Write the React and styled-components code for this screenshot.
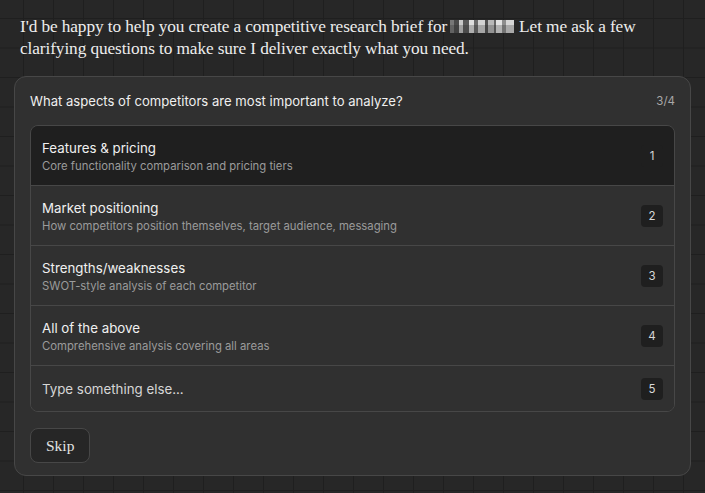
import React from 'react';
import styled, { createGlobalStyle } from 'styled-components';

const GlobalStyle = createGlobalStyle`
  html, body {
    margin: 0;
    padding: 0;
    height: 100%;
  }
  body {
    background-color: #272727;
    background-image:
      linear-gradient(to right, #1f1f1f 1px, transparent 1px),
      linear-gradient(to bottom, #1f1f1f 1px, transparent 1px);
    background-size: 30px 29.5px;
    background-position: 23px 18px;
    font-family: Inter, "Noto Sans", sans-serif;
    color: #ececec;
  }
`;

const Page = styled.div`
  width: 705px;
  height: 493px;
  box-sizing: border-box;
  padding: 16px 14px 0 14px;
  display: flex;
  flex-direction: column;
`;

const Intro = styled.p`
  margin: 0 0 16px 6px;
  font-family: "Liberation Serif", serif;
  font-size: 17.3px;
  line-height: 22px;
  color: #ededed;
  letter-spacing: -0.1px;
`;

const Redacted = styled.span`
  display: inline-block;
  width: 64px;
  height: 13px;
  margin: 0 5px -1px 3px;
  background:
    linear-gradient(90deg,
      #777 0 7%, #4a4a4a 7% 14%, #c8c8c8 14% 20%, #585858 20% 30%,
      #dedede 30% 38%, #6a6a6a 38% 44%, #d2d2d2 44% 54%, #505050 54% 60%,
      #b8b8b8 60% 68%, #666 68% 72%, #e2e2e2 72% 82%, #8d8d8d 82% 88%,
      #d6d6d6 88% 100%);
  -webkit-mask: linear-gradient(to bottom, #000 0 40%, rgba(0,0,0,0.75) 40% 100%);
`;

const Card = styled.div`
  background: #303030;
  border: 1px solid #474747;
  border-radius: 12px;
  padding: 15px 15px 14px 15px;
  height: 400px;
  box-sizing: border-box;
`;

const Header = styled.div`
  display: flex;
  justify-content: space-between;
  align-items: center;
  height: 18px;
  margin-bottom: 15px;
`;

const Question = styled.div`
  font-size: 13.1px;
  color: #efefef;
`;

const Step = styled.div`
  font-size: 11.5px;
  color: #a8a8a8;
`;

const Options = styled.div`
  border: 1px solid #474747;
  border-radius: 8px;
  overflow: hidden;
`;

const Row = styled.div`
  display: flex;
  align-items: center;
  justify-content: space-between;
  height: ${p => (p.$short ? '45px' : '59px')};
  padding: 0 11px 0 11px;
  background: ${p => (p.$active ? '#1f1f1f' : '#303030')};
  & + & {
    border-top: 1px solid #474747;
  }
`;

const Text = styled.div`
  display: flex;
  flex-direction: column;
  gap: 3px;
  padding-top: 1px;
`;

const Title = styled.div`
  font-size: 13.3px;
  color: ${p => (p.$muted ? '#d6d6d6' : '#f0f0f0')};
`;

const Sub = styled.div`
  font-size: 11.3px;
  color: #9b9b9b;
`;

const Key = styled.div`
  width: 22px;
  height: 22px;
  border-radius: 4px;
  background: #1f1f1f;
  display: flex;
  align-items: center;
  justify-content: center;
  font-size: 11.5px;
  color: #d8d8d8;
`;

const SkipButton = styled.button`
  margin-top: 16px;
  height: 35px;
  padding: 0 15px;
  background: #262626;
  border: 1px solid #474747;
  border-radius: 8px;
  color: #e2e2e2;
  font-family: "Liberation Serif", serif;
  font-size: 15.5px;
  cursor: pointer;
`;

const options = [
  { title: 'Features & pricing', sub: 'Core functionality comparison and pricing tiers' },
  { title: 'Market positioning', sub: 'How competitors position themselves, target audience, messaging' },
  { title: 'Strengths/weaknesses', sub: 'SWOT-style analysis of each competitor' },
  { title: 'All of the above', sub: 'Comprehensive analysis covering all areas' },
];

export default function App() {
  return (
    <>
      <GlobalStyle />
      <Page>
        <Intro>
          I'd be happy to help you create a competitive research brief for<Redacted />Let me ask a few clarifying questions to make sure I deliver exactly what you need.
        </Intro>
        <Card>
          <Header>
            <Question>What aspects of competitors are most important to analyze?</Question>
            <Step>3/4</Step>
          </Header>
          <Options>
            {options.map((o, i) => (
              <Row key={o.title} $active={i === 0}>
                <Text>
                  <Title>{o.title}</Title>
                  <Sub>{o.sub}</Sub>
                </Text>
                <Key>{i + 1}</Key>
              </Row>
            ))}
            <Row $short>
              <Title $muted>Type something else...</Title>
              <Key>5</Key>
            </Row>
          </Options>
          <SkipButton>Skip</SkipButton>
        </Card>
      </Page>
    </>
  );
}
